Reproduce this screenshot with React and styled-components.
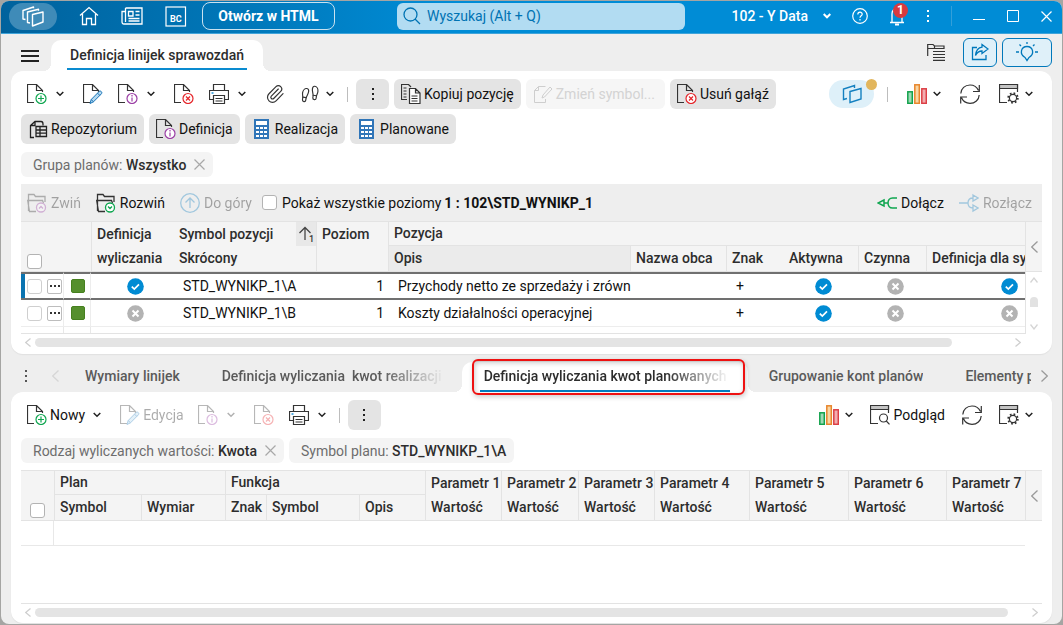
import React from "react";
import styled, { createGlobalStyle, css } from "styled-components";
import { Paperclip, Footprints } from "lucide-react";

const ink = "#2d2d2d";
const line = "#e3e3e3";
const brand = "#0078bb";

const GlobalStyle = createGlobalStyle`
  *, *::before, *::after { box-sizing: border-box; }
  body {
    margin: 0;
    background: #a5a5a3;
    font: 400 14px/20px Roboto, "Liberation Sans", sans-serif;
    color: #111;
  }
  button, input { font: inherit; color: inherit; }
  svg { display: block; flex: none; }
`;

/* ---------- window frame ---------- */

const Window = styled.div`
  display: flex;
  flex-direction: column;
  min-height: calc(100vh - 3px);
  margin: 1px 1px 2px;
  padding-bottom: 1px;
  background: #eeeeee;
  border-radius: 8px;
  overflow: hidden;
`;

const PlainButton = styled.button`
  display: flex;
  align-items: center;
  justify-content: center;
  border: 0;
  padding: 0;
  background: transparent;
  white-space: nowrap;
`;

const TitleBar = styled.header`
  display: flex;
  align-items: center;
  height: 33px;
  padding: 0 10px 2px 8px;
  color: #fff;
  background: linear-gradient(90deg, #00629d 0, #0078ba 250px, #008cd6 440px);
  border-bottom: 1px solid #3fa4da;
`;

const AppPill = styled(PlainButton)`
  width: 48px;
  height: 27px;
  border-radius: 14px;
  background: #3f8bb8;
`;

const TitleIcons = styled.nav`
  display: flex;
  align-items: center;
  gap: 22px;
  margin: 0 15px 0 22px;
`;

const OpenButton = styled(PlainButton)`
  height: 28px;
  min-width: 133px;
  padding: 0 14px;
  border: 1px solid #c9e2f0;
  border-radius: 8px;
  font-weight: 700;
`;

const SearchBox = styled.label`
  display: flex;
  align-items: center;
  gap: 4px;
  flex: 0 1 288px;
  height: 27px;
  margin-left: 62px;
  padding: 0 6px;
  border-radius: 6px;
  background: #b2dcf2;
  color: #0073b3;
`;

const SearchInput = styled.input`
  flex: 1;
  min-width: 0;
  border: 0;
  outline: 0;
  background: transparent;
  &::placeholder { color: #0073b3; opacity: 1; }
`;

const TitleRight = styled.div`
  display: flex;
  align-items: center;
  gap: 21px;
  margin-left: auto;
`;

const WindowButtons = styled.div`
  display: flex;
  align-items: center;
  gap: 22px;
`;

const Company = styled(PlainButton)`
  gap: 15px;
  font-weight: 500;
`;

const BellButton = styled(PlainButton)`
  position: relative;
`;

const Badge = styled.span`
  position: absolute;
  left: 4px;
  top: -3px;
  width: 15px;
  height: 15px;
  border-radius: 8px;
  background: #d83a3e;
  font-size: 12px;
  font-weight: 700;
  line-height: 15px;
  text-align: center;
`;

const TitleRule = styled.span`
  width: 1px;
  height: 20px;
  background: #339fd9;
`;

/* ---------- module tab strip ---------- */

const TabStrip = styled.div`
  display: flex;
  align-items: flex-end;
  height: 37px;
  padding: 0 10px 0 20px;
`;

const MenuButton = styled(PlainButton)`
  width: 18px;
  height: 31px;
  margin-right: 12px;
`;

const foot = css`
  &::before, &::after {
    content: "";
    position: absolute;
    bottom: 0;
    width: 8px;
    height: 8px;
  }
  &::before {
    right: 100%;
    background: radial-gradient(circle at 0 0, transparent 8px, #fff 8px);
  }
  &::after {
    left: 100%;
    background: radial-gradient(circle at 100% 0, transparent 8px, #fff 8px);
  }
`;

const ModuleTab = styled.button`
  position: relative;
  height: 31px;
  padding: 0 16px;
  border: 0;
  border-radius: 10px 10px 0 0;
  background: #fff;
  font-weight: 500;
  color: ${ink};
  ${foot}
`;

const TabLabel = styled.span`
  display: block;
  height: 29px;
  padding: 0 3px;
  line-height: 29px;
  border-bottom: 2px solid #0a8bd0;
`;

const StripTools = styled.div`
  display: flex;
  align-items: center;
  gap: 5px;
  height: 30px;
  margin: 0 0 4px auto;
`;

const OutlineButton = styled(PlainButton)`
  width: ${(p) => (p.$wide ? 50 : 34)}px;
  height: 29px;
  margin-left: ${(p) => (p.$wide ? 0 : 13)}px;
  border: 1px solid ${brand};
  border-radius: 6px;
  background: #dff0f9;
`;

/* ---------- cards and toolbars ---------- */

const Card = styled.section`
  display: flex;
  flex-direction: column;
  flex: ${(p) => (p.$grow ? "1 0 auto" : "none")};
  margin: 0 10px;
  padding: 8px 10px ${(p) => (p.$grow ? 3 : 4)}px;
  border-radius: 12px;
  background: #fff;
  box-shadow: 0 1px 1px #e0e0e0;
`;

const Toolbar = styled.div`
  display: flex;
  align-items: center;
  height: 30px;
  gap: ${(p) => p.$gap || 0}px;
  margin-top: ${(p) => p.$top || 0}px;
`;

const ToolButton = styled(PlainButton)`
  height: 30px;
  padding: 0 ${(p) => (p.$split ? 13 : 9)}px 0 6px;
  gap: 4px;
  opacity: ${(p) => (p.disabled ? 0.35 : 1)};
`;

const TextTool = styled(ToolButton)`
  gap: 3px;
  padding-right: ${(p) => (p.$split ? 13 : 8)}px;
`;

const BareTool = styled(PlainButton)`
  gap: 4px;
  opacity: ${(p) => (p.disabled ? 0.35 : 1)};
`;

const ChevronSlot = styled.span`
  padding-left: ${(p) => (p.$tight ? 2 : 5)}px;
`;

const Rule = styled.span`
  width: 1px;
  height: 15px;
  background: #bdbdbd;
`;

const LeadRule = styled(Rule)`
  margin-right: 8px;
`;

const FilledButton = styled(PlainButton)`
  height: 30px;
  min-width: 33px;
  padding: 0 ${(p) => (p.disabled ? 10 : 7)}px 0 7px;
  gap: 3px;
  border-radius: 6px;
  background: ${(p) => (p.disabled ? "#f6f6f6" : "#e4e4e4")};
  color: ${(p) => (p.disabled ? "#d3d3d3" : "#111")};
  svg { opacity: ${(p) => (p.disabled ? 0.2 : 1)}; }
`;

const FilledGroup = styled.div`
  display: flex;
  gap: 5px;
`;

const ToolbarRight = styled.div`
  display: flex;
  align-items: center;
  gap: ${(p) => p.$gap}px;
  margin-left: auto;
  padding-right: 9px;
`;

const SoftPill = styled(PlainButton)`
  position: relative;
  width: 45px;
  height: 28px;
  margin-right: -6px;
  border-radius: 14px;
  background: #def0f9;
`;

const Dot = styled.span`
  position: absolute;
  top: -1px;
  right: -3px;
  width: 11px;
  height: 11px;
  border-radius: 6px;
  background: #e2b65d;
`;

const Chips = styled.div`
  display: flex;
  gap: 5px;
  margin: 8px 0 7px;
`;

const Chip = styled.div`
  display: flex;
  align-items: center;
  height: 25px;
  padding: 0 8px 0 12px;
  border-radius: 6px;
  background: #f4f4f4;
  color: #6d6d6d;
  white-space: pre;
`;

const ChipValue = styled.strong`
  font-weight: 500;
  color: ${ink};
`;

const ChipClose = styled(PlainButton)`
  margin-left: 8px;
`;

/* ---------- grids ---------- */

const GridBar = styled.div`
  display: flex;
  align-items: center;
  gap: 15px;
  height: 37px;
  padding: 0 10px 0 6px;
  background: #eeeeee;
`;

const LevelToggle = styled.label`
  display: flex;
  align-items: center;
  gap: 5px;
  margin-left: -5px;
  white-space: nowrap;
`;

const Path = styled.strong`
  margin-left: -12px;
  font-weight: 700;
  white-space: nowrap;
`;

const BarEnd = styled.div`
  display: flex;
  gap: 15px;
  margin-left: auto;
`;

const Check = styled.input.attrs({ type: "checkbox" })`
  appearance: none;
  flex: none;
  width: 15px;
  height: 15px;
  margin: 0;
  border: 1px solid ${(p) => (p.$soft ? "#cfcfcf" : "#b3b3b3")};
  border-radius: 3px;
  background: #fff;
`;

const GridArea = styled.div`
  display: flex;
  flex: 1 0 auto;
  min-height: ${(p) => p.$min}px;
  border-top: 1px solid ${line};
`;

const Scroller = styled.div`
  flex: 1;
  min-width: 0;
  overflow: hidden;
  border-bottom: 1px solid ${line};
`;

const Table = styled.table`
  width: 100%;
  min-width: ${(p) => p.$min}px;
  table-layout: fixed;
  border-spacing: 0;
`;

const Th = styled.th`
  height: ${(p) => (p.rowSpan === 2 ? 50 : p.$group ? 24 : 26)}px;
  padding: 0 0 0 ${(p) => (p.$edge ? 5 : 6)}px;
  border-left: ${(p) => (p.$edge ? 1 : 0)}px solid ${line};
  border-bottom: 1px solid ${line};
  background: ${(p) => (p.$active ? "#ebebeb" : "#f4f4f4")};
  vertical-align: top;
  text-align: left;
  font-weight: 500;
  line-height: ${(p) => (p.$group ? 23 : 24)}px;
  white-space: nowrap;
  overflow: hidden;
  color: ${ink};
`;

const CheckTh = styled(Th)`
  padding: 0 0 2px ${(p) => p.$pad}px;
  vertical-align: bottom;
  input { display: block; }
`;

const SortHead = styled.div`
  display: flex;
  justify-content: space-between;
`;

const SortMark = styled.span`
  display: flex;
  align-items: center;
  justify-content: center;
  width: 20px;
  height: 24px;
  background: #e8e8e8;
`;

const Row = styled.tr`
  height: ${(p) => (p.$selected ? 28 : 27)}px;
  td {
    border-bottom: 1px solid #ededed;
    ${(p) =>
      p.$selected &&
      css`
        border-top: 2px solid #707070;
        border-bottom: 2px solid #707070;
      `}
  }
`;

const Td = styled.td`
  padding: 0 ${(p) => (p.$right ? 4 : 0)}px 0 ${(p) => (p.$center ? 6 : 10)}px;
  text-align: ${(p) => (p.$right ? "right" : "left")};
  white-space: nowrap;
  svg { margin: 0 auto; }
`;

const PickTd = styled.td`
  padding: 0 0 0 6px;
  border-right: 1px solid #ededed;
  box-shadow: ${(p) => (p.$mark ? "inset 4px 0 #0a73b0" : "none")};
`;

const StateTd = styled.td`
  padding: 0 0 0 7px;
  border-right: 1px solid #ededed;
`;

const FillerTd = styled.td`
  height: ${(p) => p.$h}px;
  padding: 0;
  border-right: ${(p) => (p.$edge ? 1 : 0)}px solid #e8e8e8;
  border-bottom: ${(p) => (p.$ruled ? 1 : 0)}px solid #e8e8e8;
`;

const Pick = styled.div`
  display: flex;
  gap: 5px;
`;

const MoreButton = styled(PlainButton)`
  width: 15px;
  height: 15px;
  border: 1px solid #bdbdbd;
  border-radius: 2px;
`;

const State = styled.span`
  display: block;
  width: 14px;
  height: 14px;
  border: 1px solid #46801f;
  border-radius: 2px;
  background: #558f2d;
`;

const Side = styled.div`
  display: flex;
  flex-direction: column;
  width: 17px;
  border-left: ${(p) => (p.$line ? 1 : 0)}px solid ${line};
  border-bottom: ${(p) => (p.$line ? 0 : 1)}px solid ${line};
`;

const SideHead = styled(PlainButton)`
  height: 50px;
  border-bottom: 1px solid ${line};
  border-left: ${(p) => (p.$line ? 1 : 0)}px solid ${line};
  background: #f4f4f4;
`;

const VScroll = styled.div`
  display: flex;
  flex: 1;
  flex-direction: column;
  align-items: center;
  justify-content: space-between;
  padding: 5px 0 4px;
`;

const VThumb = styled.span`
  width: 8px;
  height: 10px;
  margin-bottom: 4px;
  border-radius: 4px 4px 0 0;
  background: #e2e2e2;
`;

const HScroll = styled.div`
  display: flex;
  align-items: center;
  gap: 4px;
  height: 16px;
  padding: 0 4px;
  padding-right: ${(p) => (p.$inset ? 21 : 4)}px;
`;

const HTrack = styled.div`
  flex: 1;
`;

const HThumb = styled.div`
  width: ${(p) => p.$size}%;
  height: 9px;
  border-radius: 5px;
  background: #e4e4e4;
`;

/* ---------- detail tabs ---------- */

const DetailTabs = styled.nav`
  display: flex;
  align-items: flex-end;
  height: 38px;
  padding: 0 14px 0 20px;
`;

const DetailNav = styled(PlainButton)`
  flex: none;
  justify-content: ${(p) => (p.$end ? "flex-end" : "center")};
  width: ${(p) => p.$w}px;
  height: 32px;
`;

const TabList = styled.div`
  display: flex;
  flex: 1;
  min-width: 0;
  margin: 0 10px 0 5px;
  clip-path: inset(-10px 0);
`;

const DetailTab = styled.button`
  position: relative;
  flex: none;
  height: 30px;
  padding: 0 ${(p) => (p.$active ? 18 : 21)}px;
  border: 0;
  border-radius: 10px 10px 0 0;
  background: ${(p) => (p.$active ? "#fff" : "transparent")};
  font-weight: 500;
  color: ${(p) => (p.$active ? ink : "#5a5a5a")};
  ${(p) => p.$active && foot}
`;

const DetailLabel = styled.span`
  display: block;
  width: ${(p) => (p.$w ? p.$w + "px" : "auto")};
  height: 30px;
  padding: 0 ${(p) => (p.$active ? 4 : 0)}px;
  border-bottom: 2px solid ${(p) => (p.$active ? "#007cc0" : "transparent")};
`;

const LabelText = styled.span`
  display: block;
  line-height: 28px;
  white-space: pre;
  overflow: hidden;
  ${(p) =>
    p.$fade &&
    css`
      mask-image: linear-gradient(90deg, #000 calc(100% - 60px), transparent calc(100% + 4px));
    `}
`;

const Highlight = styled.span`
  position: absolute;
  z-index: 1;
  inset: -3px 3px -3px 10px;
  border: 2px solid #ee1111;
  border-radius: 6px;
  box-shadow: 1px 2px 5px #0003, inset 1px 2px 5px #0003;
  pointer-events: none;
`;

/* ---------- icons ---------- */

const Steps = styled(Footprints)`
  transform: scaleX(-1) rotate(-8deg);
`;

function Svg({ w = 20, h = 20, children, ...rest }) {
  return (
    <svg width={w} height={h} viewBox={`0 0 ${w} ${h}`} fill="none" stroke="#333" aria-hidden="true" {...rest}>
      {children}
    </svg>
  );
}

const Doc = () => <path d="M7 18.5H.5V.5H9.5L15.5 6.5V8M9.5 .5V6.5H15.5" strokeWidth="1.2" />;

const DocAdd = () => (
  <Svg><Doc /><g stroke="#0fa650" strokeWidth="1.2"><circle cx="14" cy="14.5" r="5" fill="#fff" /><path d="M11 14.5h6M14 11.5v6" /></g></Svg>
);
const DocInfo = () => (
  <Svg><Doc /><g stroke="#9b3fa5" strokeWidth="1.2"><circle cx="14" cy="14.5" r="5" fill="#fff" /><path d="M14 13.5v4M14 11v1.4" /></g></Svg>
);
const DocDelete = () => (
  <Svg><Doc /><g stroke="#e5252a" strokeWidth="1.2"><circle cx="14" cy="14.5" r="5" fill="#fff" /><path d="M12 12.5l4 4M16 12.5l-4 4" /></g></Svg>
);
const DocEdit = () => (
  <Svg><Doc /><path d="M7 19.5l1.2-4L16 7.6c.7-.7 1.7-.7 2.3 0 .7.6.7 1.6 0 2.3L10.5 17.8zM8.2 15.5l2.3 2.3M14.6 9.2l2.2 2.2" fill="#b5d9f0" stroke="#1672b5" /></Svg>
);
const DocWrite = () => (
  <Svg><path d="M12.5 2.5H5.5L1.5 6.5V18.5H12.5V15M5.5 2.5V6.5H1.5M9 14l1-3L17 3l2 2-7.5 8z" /></Svg>
);
const Printer = () => (
  <Svg strokeWidth="1.2"><path d="M4.5 6V.5H15.5V6M4 15.5H.5V6.5H19.5V15.5H16M4.5 11.5H15.5V19.5H4.5zM6.5 14.5h7M6.5 17h7" /><path d="M2.5 9h2" stroke="#1a8fd6" strokeWidth="1.5" /></Svg>
);
const Copy = () => (
  <Svg strokeWidth="1.2"><path d="M6 15.5H.5V.5H7.5L10 3M2.5 4h3M2.5 7h3M2.5 10h3M2.5 13h3" /><path d="M8.5 4.5H14.5L19 9V19.5H8.5zM14.5 4.5V9H19M10.5 12h6M10.5 14.5h6M10.5 17h6" fill="#fff" /></Svg>
);
const Repo = () => (
  <Svg strokeWidth="1.3" stroke="#222"><path d="M6 18.5H2.5V6.5L7 2.5H13C14.500 2.500 15 3.500 15 5V6.500M7 2.500V6.500H2.500" /><path d="M8 7.5H18.5V17.5H8zM8 11H18.5M8 14.200H18.5M12 7.500V17.500" fill="#e4e4e4" /></Svg>
);
const Calc = () => (
  <Svg stroke="none">
    <rect x="2" width="15" height="20" fill="#2f75b8" /><rect x="4" y="2" width="11" height="4" fill="#fff" />
    {[8, 12, 16].map((y) => [4, 8, 12].map((x) => <rect key={`${x}${y}`} x={x} y={y} width="3" height="2" fill="#fff" />))}
  </Svg>
);
const Bars = () => (
  <Svg strokeWidth="1.5"><rect x=".8" y="7.8" width="4.5" height="11.5" stroke="#12a24d" fill="#9fd9b5" /><rect x="7.8" y=".8" width="4.5" height="18.5" stroke="#e8862c" fill="#f9d6a3" /><rect x="14.8" y="4.8" width="4.5" height="14.5" stroke="#dc3f46" fill="#f2adb0" /></Svg>
);
const Refresh = () => (
  <Svg strokeWidth="1.2"><path d="M.8 9.5C1 4.5 5 1 10 1c3.8 0 7 2.2 8.5 5.5M19.3 1V7.5H13M19.2 11C19 15.8 15 19.3 10 19.3c-3.8 0-7-2.2-8.5-5.5M.7 19.5V13H7" /></Svg>
);
const PanelGear = () => (
  <Svg strokeWidth="1.2"><path d="M8 18.5H.5V.5H18.5V8" /><path d="M.5 .5H18.5V4.5H.5z" fill="#c4c4c4" /><circle cx="14" cy="14" r="3.6" /><circle cx="14" cy="14" r="4.8" strokeWidth="1.8" strokeDasharray="1.7 2.07" /></Svg>
);
const PanelSearch = () => (
  <Svg strokeWidth="1.2"><path d="M8 18.5H.5V.5H18.5V8" /><path d="M.5 .5H18.5V4.5H.5z" fill="#c4c4c4" /><circle cx="13.5" cy="13" r="4" /><path d="M16.3 16l3.2 3.3" /></Svg>
);
const Folder = ({ open }) => (
  <Svg strokeWidth="1.3">
    <path d="M9 18.5H2.500L.7 7.500H15.500L16.500 10M1.500 7V1.500H7L8.500 3.500H18V9M1.500 18V7" />
    <g stroke={open ? "#0fa650" : "#9b3fa5"}><circle cx="14" cy="14.5" r="4.5" fill="#fff" /><path d={open ? "M12 13.5l2 2 2-2" : "M12 15.5l2-2 2 2"} /></g>
  </Svg>
);
const UpCircle = () => (
  <Svg stroke="#1480c0" strokeWidth="1.3"><circle cx="10" cy="10" r="9.3" /><path d="M10 15V5M5.5 9.5L10 5l4.5 4.5" /></Svg>
);
const Join = () => (
  <Svg stroke="#0fa650" strokeWidth="1.5"><path d="M20 5H15.5C12.5 5 11 7.5 11 10s1.5 5 4.5 5H20M11 10H7M7 7L1 10l6 3z" /></Svg>
);
const Split = () => (
  <Svg stroke="#1480c0" strokeWidth="1.3"><path d="M0 10H9M14 5C10.5 5 9 7 9 10s1.5 5 5 5M14 2l5 3-5 3zM14 12l5 3-5 3z" /></Svg>
);
const Kebab = ({ color = "#222", size = 2 }) => (
  <Svg w={4} h={14} stroke="none" fill={color}>{[1, 6, 11].map((y) => <rect key={y} x="1" y={y} width={size} height={size} />)}</Svg>
);
const Caret = ({ color = "#222", width = 1.5 }) => (
  <Svg w={8} h={6} stroke={color} strokeWidth={width}><path d="M.7 1L4 4.3 7.3 1" /></Svg>
);
const Arrow = ({ dir, color = "#9a9a9a", w = 7, h = 12 }) => (
  <Svg w={w} h={h} stroke={color} strokeWidth="1.3"><path d={dir === "left" ? `M${w - 0.5} .5L.7 ${h / 2}l${w - 1.2} ${h / 2 - 0.5}` : `M.5 .5L${w - 0.7} ${h / 2}L.5 ${h - 0.5}`} /></Svg>
);
const VArrow = ({ up }) => (
  <Svg w={8} h={6} stroke="#d5d5d5" strokeWidth="1.3"><path d={up ? "M.5 5.5L4 1l3.5 4.5" : "M.5 .5L4 5 7.5 .5"} /></Svg>
);
const Cross = ({ color = "#a8a8a8", s = 11, width = 1.2 }) => (
  <Svg w={s} h={s} stroke={color} strokeWidth={width}><path d={`M.5 .5l${s - 1} ${s - 1}M${s - 0.5} .5L.5 ${s - 0.5}`} /></Svg>
);
const AppLayers = () => (
  <Svg w={22} h={21} stroke="#fff" strokeWidth="1.4" strokeLinejoin="round">
    <path d="M10.500 8.500L21 6V16L10.500 20z" />
    <path d="M8 17L5.500 16.500V6L16.500 3.200V4.800" />
    <path d="M3.500 13.500L1 13V4.500L11.500 1V2.200" />
  </Svg>
);
const PillLayers = () => (
  <Svg w={20} h={20} stroke="#1480c0" strokeWidth="1.4"><path d="M8 7.5L19 4.500V15L8 18.500zM5 14.500L1.500 15.500V5L12.500 1.500V4" /></Svg>
);
const Yes = () => (
  <Svg w={17} h={17} stroke="#fff" strokeWidth="1.7"><circle cx="8.5" cy="8.5" r="8.3" fill="#008bd3" stroke="none" /><path d="M4.8 8.6l2.5 2.5 4.7-4.8" /></Svg>
);
const No = () => (
  <Svg w={17} h={17} stroke="#fff" strokeWidth="2"><circle cx="8.5" cy="8.5" r="8.3" fill="#b3b3b3" stroke="none" /><path d="M5.5 5.5l6 6M11.5 5.5l-6 6" /></Svg>
);
const Mark = ({ on }) => (on ? <Yes /> : <No />);

/* ---------- data ---------- */

const lines = [
  { symbol: "STD_WYNIKP_1\\A", level: 1, text: "Przychody netto ze sprzedaży i zrówn", calc: true, active: true, live: false, def: true },
  { symbol: "STD_WYNIKP_1\\B", level: 1, text: "Koszty działalności operacyjnej", calc: false, active: true, live: false, def: false },
];

const lineCols = [43, 27, 82, 143, 72, 242, 96, 57, 75, 68];
const planCols = [33, 87, 84, 41, 93, 66, 76, 77, 76, 95, 99, 98];

function Cols({ widths }) {
  return (
    <colgroup>
      {widths.map((w, i) => <col key={i} width={w} />)}
      <col />
    </colgroup>
  );
}

function Chevron({ tight }) {
  return <ChevronSlot $tight={tight}><Caret /></ChevronSlot>;
}

function ScrollX({ size, inset }) {
  return (
    <HScroll $inset={inset}>
      <Arrow dir="left" color="#cfcfcf" w={6} h={9} />
      <HTrack><HThumb $size={size} /></HTrack>
      <Arrow dir="right" color="#cfcfcf" w={6} h={9} />
    </HScroll>
  );
}

function TopBar() {
  return (
    <TitleBar>
      <AppPill aria-label="Aplikacja"><AppLayers /></AppPill>
      <TitleIcons>
        <PlainButton aria-label="Start"><Svg stroke="#fff" strokeWidth="1.3"><path d="M1 9.5L10 1.5l9 8M3.5 8V18.5H7.5V12.5H12.5V18.5H16.5V8" /></Svg></PlainButton>
        <PlainButton aria-label="Aktualności">
          <Svg w={22} h={18} stroke="#fff" strokeWidth="1.3"><path d="M4.5 1H21V17H3C1.5 17 1 16 1 14.5V4.5H4.5M4.5 1V15M7.5 4.5H12V9H7.5zM14.5 4.5h4M14.5 8h4M7.5 11.5h11M7.5 14h11" /></Svg>
        </PlainButton>
        <PlainButton aria-label="BC">
          <Svg w={22} h={21} stroke="#fff" strokeWidth="1.2"><rect x="1" y="1" width="19.5" height="19" /><text x="5" y="16" fontSize="9" fontWeight="700" fontFamily="Roboto, sans-serif" fill="#fff" stroke="none">BC</text></Svg>
        </PlainButton>
      </TitleIcons>
      <OpenButton>Otwórz w HTML</OpenButton>
      <SearchBox>
        <Svg w={18} h={18} stroke="#0073b3" strokeWidth="1.3"><circle cx="7.5" cy="7.5" r="6.5" /><path d="M12 12l5 5" /></Svg>
        <SearchInput placeholder="Wyszukaj (Alt + Q)" aria-label="Wyszukaj" />
      </SearchBox>
      <TitleRight>
        <Company>102 - Y Data<Caret color="#fff" width={2} /></Company>
        <PlainButton aria-label="Pomoc">
          <Svg w={16} h={16} stroke="#fff" strokeWidth="1.2"><circle cx="8" cy="8" r="7.3" /><path d="M5.8 6.5c0-3 4.4-3 4.4-.3 0 1.6-2.2 1.7-2.2 3.6M8 11v1.4" /></Svg>
        </PlainButton>
        <BellButton aria-label="Powiadomienia">
          <Svg w={16} h={20} stroke="#fff" strokeWidth="1.3"><path d="M1 16.5H15M3 16.5V8C3 5 5 3 8 3s5 2 5 5v8.5" /><path d="M6 18.5h4" strokeWidth="2" /></Svg>
          <Badge>1</Badge>
        </BellButton>
        <PlainButton aria-label="Więcej"><Kebab color="#fff" /></PlainButton>
        <TitleRule />
        <WindowButtons>
          <PlainButton aria-label="Minimalizuj"><Svg w={12} h={12} stroke="#fff"><path d="M0 9.5h12" /></Svg></PlainButton>
          <PlainButton aria-label="Maksymalizuj"><Svg w={12} h={12} stroke="#fff"><path d="M.5 .5H11.5V11.5H.5z" /></Svg></PlainButton>
          <PlainButton aria-label="Zamknij"><Cross color="#fff" /></PlainButton>
        </WindowButtons>
      </TitleRight>
    </TitleBar>
  );
}

function ModuleStrip() {
  return (
    <TabStrip>
      <MenuButton aria-label="Menu"><Svg w={18} h={14} strokeWidth="2" stroke="#222"><path d="M0 2h18M0 7h18M0 12h18" /></Svg></MenuButton>
      <ModuleTab><TabLabel>Definicja linijek sprawozdań</TabLabel></ModuleTab>
      <StripTools>
        <PlainButton aria-label="Drzewo"><Svg w={18} h={18} strokeWidth="1.2"><path d="M.7 13V1.500H6L7.500 3H17V5.500H.7M7.500 3V5.500M6 8.500H18M6 11.500H18M6 14.500H18M6 17.300H18" /></Svg></PlainButton>
        <OutlineButton aria-label="Udostępnij">
          <Svg w={18} h={18} stroke={brand} strokeWidth="1.3"><path d="M6 4.5H1.5V16.5H15V12M11 1.5l6 4.5-6 4.5V8C8 8 6 9.5 4.5 12.5 5 8 7.5 4.5 11 4.2z" /></Svg>
        </OutlineButton>
        <OutlineButton $wide aria-label="Podpowiedzi">
          <Svg w={22} h={20} stroke={brand} strokeWidth="1.3"><path d="M9 15.5C3 12 5 4.5 11 4.5s8 7.5 2 11l-2 3zM11 0v2M3.5 2.5l1.500 1.500M18.500 2.500L17 4M0 10h3M19 10h3" /></Svg>
        </OutlineButton>
      </StripTools>
    </TabStrip>
  );
}

function LinesCard() {
  return (
    <Card>
      <Toolbar>
        <ToolButton $split aria-label="Nowy"><DocAdd /><Chevron /></ToolButton>
        <ToolButton aria-label="Edycja"><DocEdit /></ToolButton>
        <ToolButton $split aria-label="Informacje"><DocInfo /><Chevron /></ToolButton>
        <ToolButton aria-label="Usuń"><DocDelete /></ToolButton>
        <ToolButton $split aria-label="Drukuj"><Printer /><Chevron /></ToolButton>
        <ToolButton aria-label="Załączniki"><Paperclip size={20} strokeWidth={1.4} color="#333" /></ToolButton>
        <ToolButton $split aria-label="Ślad"><Steps size={20} strokeWidth={1.4} color="#333" /><Chevron tight /></ToolButton>
        <LeadRule />
        <FilledGroup>
          <FilledButton aria-label="Więcej"><Kebab /></FilledButton>
          <FilledButton><Copy />Kopiuj pozycję</FilledButton>
          <FilledButton disabled><DocWrite />Zmień symbol...</FilledButton>
          <FilledButton><DocDelete />Usuń gałąź</FilledButton>
        </FilledGroup>
        <ToolbarRight $gap={19}>
          <SoftPill aria-label="Panele"><PillLayers /><Dot /></SoftPill>
          <Rule />
          <BareTool aria-label="Wykresy"><Bars /><Chevron tight /></BareTool>
          <BareTool aria-label="Odśwież"><Refresh /></BareTool>
          <BareTool aria-label="Ustawienia"><PanelGear /><Chevron tight /></BareTool>
        </ToolbarRight>
      </Toolbar>
      <Toolbar $top={5} $gap={5}>
        <FilledButton><Repo />Repozytorium</FilledButton>
        <FilledButton><DocInfo />Definicja</FilledButton>
        <FilledButton><Calc />Realizacja</FilledButton>
        <FilledButton><Calc />Planowane</FilledButton>
      </Toolbar>
      <Chips>
        <Chip>Grupa planów: <ChipValue>Wszystko</ChipValue><ChipClose aria-label="Usuń filtr"><Cross /></ChipClose></Chip>
      </Chips>
      <GridBar>
        <BareTool disabled><Folder />Zwiń</BareTool>
        <BareTool><Folder open />Rozwiń</BareTool>
        <BareTool disabled><UpCircle />Do góry</BareTool>
        <LevelToggle><Check />Pokaż wszystkie poziomy</LevelToggle>
        <Path>1 : 102\STD_WYNIKP_1</Path>
        <BarEnd>
          <BareTool><Join />Dołącz</BareTool>
          <BareTool disabled><Split />Rozłącz</BareTool>
        </BarEnd>
      </GridBar>
      <GridArea $min={113}>
        <Scroller>
          <Table $min={1065}>
            <Cols widths={lineCols} />
            <thead>
              <tr>
                <CheckTh colSpan={2} rowSpan={2} $pad={6}><Check aria-label="Zaznacz wszystko" /></CheckTh>
                <Th rowSpan={2} $edge>Definicja<br />wyliczania</Th>
                <Th rowSpan={2}><SortHead><span>Symbol pozycji<br />Skrócony</span><SortMark><Svg w={16} h={18} stroke="#444" strokeWidth="1.3"><path d="M7 15V3M1.5 8L7 2.5 12.5 8" /><text x="11" y="17" fontSize="9" fontFamily="Roboto, sans-serif" fill="#333" stroke="none">1</text></Svg></SortMark></SortHead></Th>
                <Th rowSpan={2} $edge>Poziom</Th>
                <Th colSpan={6} $edge $group>Pozycja</Th>
              </tr>
              <tr>
                <Th $edge $active>Opis</Th>
                <Th $edge>Nazwa obca</Th>
                <Th $edge>Znak</Th>
                <Th>Aktywna</Th>
                <Th $edge>Czynna</Th>
                <Th $edge>Definicja dla symbolu</Th>
              </tr>
            </thead>
            <tbody>
              {lines.map((r, i) => (
                <Row key={r.symbol} $selected={i === 0}>
                  <PickTd $mark={i === 0}><Pick><Check $soft aria-label={`Zaznacz ${r.symbol}`} /><MoreButton aria-label="Więcej"><Svg w={10} h={2} stroke="none" fill="#333"><path d="M0 0h2v2H0zM4 0h2v2H4zM8 0h2v2H8z" /></Svg></MoreButton></Pick></PickTd>
                  <StateTd><State /></StateTd>
                  <Td $center><Mark on={r.calc} /></Td>
                  <Td>{r.symbol}</Td>
                  <Td $right>{r.level}</Td>
                  <Td>{r.text}</Td>
                  <Td />
                  <Td>+</Td>
                  <Td $center><Mark on={r.active} /></Td>
                  <Td $center><Mark on={r.live} /></Td>
                  <Td $center><Mark on={r.def} /></Td>
                </Row>
              ))}
              <tr><FillerTd $h={6} $edge /><FillerTd $edge /><FillerTd colSpan={9} /></tr>
            </tbody>
          </Table>
        </Scroller>
        <Side $line>
          <SideHead aria-label="Zwiń panel"><Arrow dir="left" /></SideHead>
          <VScroll><VArrow up /><VThumb /><VArrow /></VScroll>
        </Side>
      </GridArea>
      <ScrollX size={94} inset />
    </Card>
  );
}

function DetailStrip() {
  return (
    <DetailTabs>
      <DetailNav $w={10} aria-label="Lista zakładek"><Kebab color="#555" /></DetailNav>
      <DetailNav $w={28} $end aria-label="Poprzednie"><Arrow dir="left" color="#d6d6d6" /></DetailNav>
      <TabList>
        <DetailTab><DetailLabel><LabelText>Wymiary linijek</LabelText></DetailLabel></DetailTab>
        <DetailTab><DetailLabel $w={219}><LabelText $fade>Definicja wyliczania  kwot realizacji</LabelText></DetailLabel></DetailTab>
        <DetailTab $active><DetailLabel $active $w={250}><LabelText $fade>Definicja wyliczania kwot planowanych</LabelText></DetailLabel><Highlight /></DetailTab>
        <DetailTab><DetailLabel><LabelText>Grupowanie kont planów</LabelText></DetailLabel></DetailTab>
        <DetailTab><DetailLabel><LabelText>Elementy planów</LabelText></DetailLabel></DetailTab>
      </TabList>
      <DetailNav $w={7} aria-label="Następne"><Arrow dir="right" /></DetailNav>
    </DetailTabs>
  );
}

function PlansCard() {
  return (
    <Card $grow>
      <Toolbar>
        <TextTool $split><DocAdd />Nowy<Chevron /></TextTool>
        <TextTool disabled><DocEdit />Edycja</TextTool>
        <ToolButton $split disabled aria-label="Informacje"><DocInfo /><Chevron /></ToolButton>
        <ToolButton disabled aria-label="Usuń"><DocDelete /></ToolButton>
        <ToolButton $split aria-label="Drukuj"><Printer /><Chevron /></ToolButton>
        <LeadRule />
        <FilledButton aria-label="Więcej"><Kebab /></FilledButton>
        <ToolbarRight $gap={17}>
          <BareTool aria-label="Wykresy"><Bars /><Chevron tight /></BareTool>
          <BareTool><PanelSearch />Podgląd</BareTool>
          <BareTool aria-label="Odśwież"><Refresh /></BareTool>
          <BareTool aria-label="Ustawienia"><PanelGear /><Chevron tight /></BareTool>
        </ToolbarRight>
      </Toolbar>
      <Chips>
        <Chip>Rodzaj wyliczanych wartości: <ChipValue>Kwota</ChipValue><ChipClose aria-label="Usuń filtr"><Cross /></ChipClose></Chip>
        <Chip>Symbol planu: <ChipValue>STD_WYNIKP_1\A</ChipValue></Chip>
      </Chips>
      <GridArea $min={134}>
        <Scroller>
          <Table $min={1004}>
            <Cols widths={planCols} />
            <thead>
              <tr>
                <CheckTh rowSpan={2} $pad={9}><Check aria-label="Zaznacz wszystko" /></CheckTh>
                <Th colSpan={2} $edge $group>Plan</Th>
                <Th colSpan={3} $edge $group>Funkcja</Th>
                {[1, 2, 3, 4, 5, 6, 7].map((n) => <Th key={n} rowSpan={2} $edge>Parametr {n}<br />Wartość</Th>)}
              </tr>
              <tr>
                <Th $edge>Symbol</Th>
                <Th $edge>Wymiar</Th>
                <Th $edge>Znak</Th>
                <Th $edge>Symbol</Th>
                <Th $edge>Opis</Th>
              </tr>
            </thead>
            <tbody>
              <tr><FillerTd $h={25} $edge $ruled /><FillerTd colSpan={12} $ruled /></tr>
            </tbody>
          </Table>
        </Scroller>
        <Side><SideHead $line aria-label="Zwiń panel"><Arrow dir="left" /></SideHead></Side>
      </GridArea>
      <ScrollX size={98} />
    </Card>
  );
}

export default function App() {
  return (
    <>
      <GlobalStyle />
      <Window>
        <TopBar />
        <ModuleStrip />
        <LinesCard />
        <DetailStrip />
        <PlansCard />
      </Window>
    </>
  );
}
